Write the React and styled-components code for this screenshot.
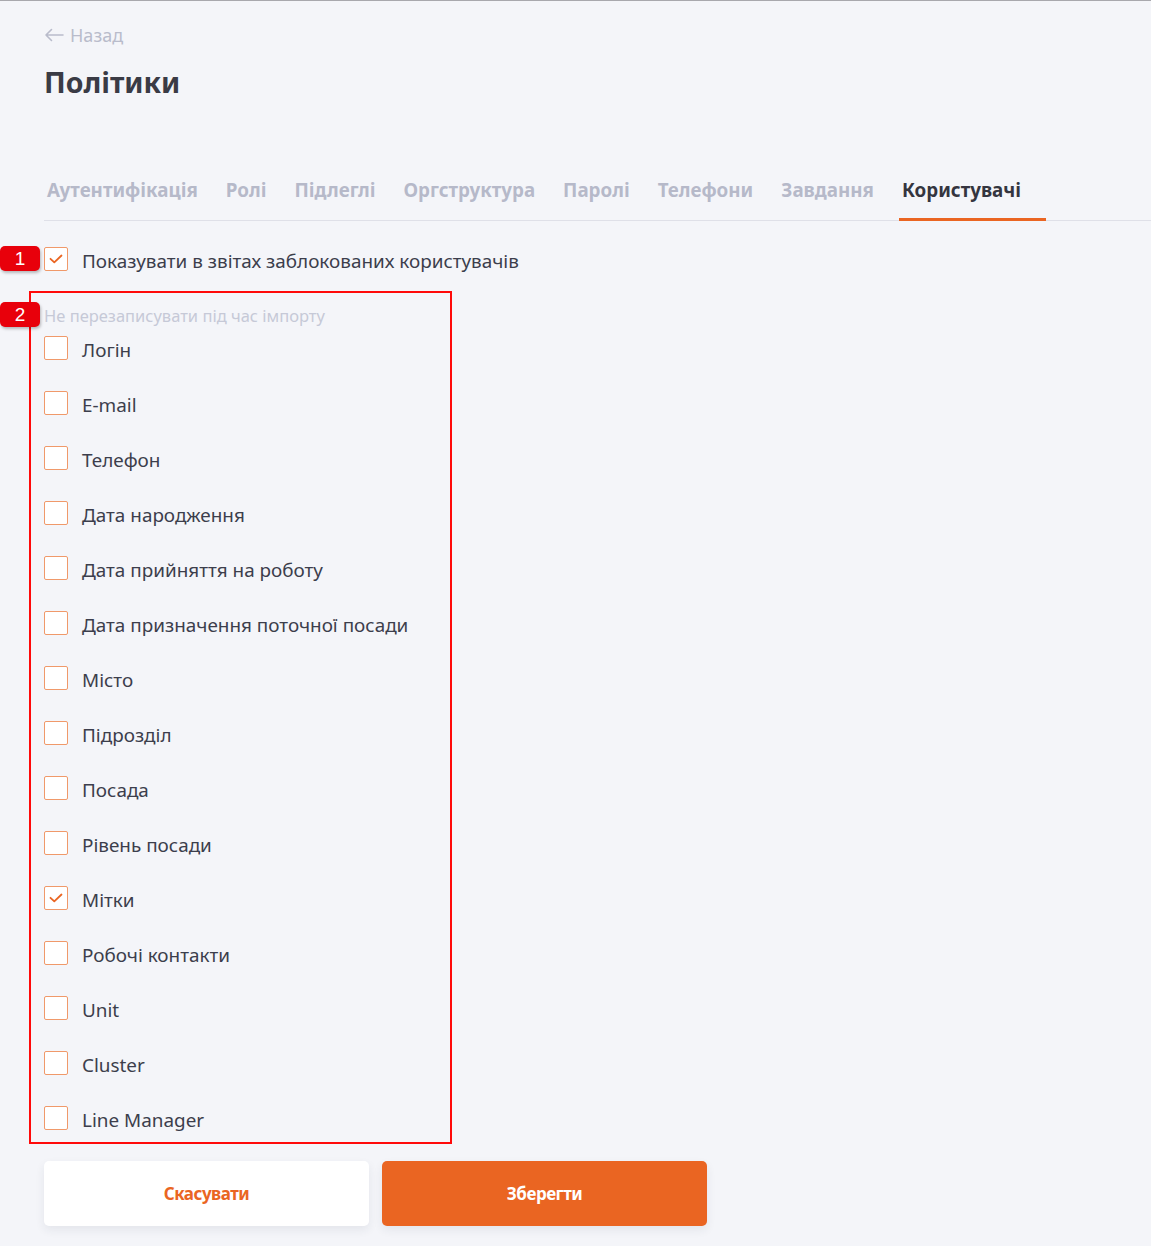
import React, { useState } from "react";
import styled, { createGlobalStyle } from "styled-components";

const Global = createGlobalStyle`
  html, body { margin: 0; padding: 0; background: #f4f5f9; }
  body {
    border-top: 1px solid #a8a8ad;
    font-family: "Noto Sans", "Open Sans", sans-serif;
    color: #3c3e4c;
  }
`;

const Page = styled.div`
  padding: 23px 0 40px 44px;
  min-height: 1180px;
`;

const Back = styled.a`
  display: inline-flex;
  align-items: center;
  gap: 6px;
  height: 22px;
  font-size: 18px;
  line-height: 22px;
  color: #b9bccb;
  cursor: pointer;
`;

const Title = styled.h1`
  margin: 17px 0 0;
  font-size: 28.5px;
  line-height: 36px;
  font-weight: 700;
  color: #3a3b45;
`;

const Tabs = styled.div`
  display: flex;
  margin-top: 78px;
  border-bottom: 1px solid #dfe0e8;
`;

const Tab = styled.div`
  padding: 0 25px 16px 3px;
  margin-bottom: -1px;
  font-size: 18.8px;
  line-height: 24px;
  font-weight: 700;
  color: ${(p) => (p.$active ? "#34353f" : "#b6b9c9")};
  border-bottom: 3px solid ${(p) => (p.$active ? "#ea6522" : "transparent")};
  white-space: nowrap;
`;

const Row = styled.label`
  position: relative;
  display: flex;
  align-items: center;
  gap: 14px;
  height: 24px;
  margin-top: ${(p) => p.$top || 0}px;
  font-size: 18.9px;
  line-height: 24px;
  cursor: pointer;
`;

const Text = styled.span`
  padding-top: 3px;
`;

const Box = styled.span`
  flex: none;
  width: 22px;
  height: 22px;
  border: 1px solid #f0996a;
  border-radius: 2px;
  background: #fff;
  display: flex;
  align-items: center;
  justify-content: center;
`;

const Badge = styled.div`
  position: absolute;
  left: ${(p) => p.$left}px;
  top: ${(p) => p.$top}px;
  width: 40px;
  height: 25px;
  border-radius: 5px;
  background: #e8000b;
  color: #fff;
  font-family: "Liberation Sans", Arial, sans-serif;
  font-size: 19px;
  line-height: 25px;
  text-align: center;
  box-shadow: 1px 2px 3px rgba(0, 0, 0, 0.25);
`;

const Group = styled.div`
  position: relative;
  width: 406px;
  margin: 20px 0 0 -15px;
  padding: 12px 0 12px 13px;
  border: 2px solid #ff0a0a;
  display: flex;
  flex-direction: column;
  gap: 31px;
`;

const Caption = styled.div`
  font-size: 16.5px;
  line-height: 22px;
  color: #c6c9d7;
  margin-bottom: -22px;
`;

const Buttons = styled.div`
  display: flex;
  gap: 13px;
  margin-top: 17px;
`;

const Button = styled.button`
  width: 325px;
  height: 65px;
  border: none;
  border-radius: 5px;
  font-family: "Noto Sans", sans-serif;
  font-size: 17px;
  font-weight: 700;
  letter-spacing: -0.5px;
  cursor: pointer;
  background: ${(p) => (p.$primary ? "#ea6522" : "#fff")};
  color: ${(p) => (p.$primary ? "#fff" : "#ea6522")};
  box-shadow: 0 4px 10px rgba(40, 45, 80, 0.08);
`;

const Check = () => (
  <svg width="14" height="10" viewBox="0 0 14 10" fill="none">
    <path d="M1.5 4.8 L5.3 8.3 L12.5 1.5" stroke="#ea6522" strokeWidth="1.8" strokeLinecap="round" strokeLinejoin="round" />
  </svg>
);

const Checkbox = ({ checked, onChange, children, top }) => (
  <Row $top={top} onClick={onChange}>
    <Box>{checked && <Check />}</Box>
    <Text>{children}</Text>
  </Row>
);

const tabs = ["Аутентифікація", "Ролі", "Підлеглі", "Оргструктура", "Паролі", "Телефони", "Завдання", "Користувачі"];

const fields = [
  "Логін",
  "E-mail",
  "Телефон",
  "Дата народження",
  "Дата прийняття на роботу",
  "Дата призначення поточної посади",
  "Місто",
  "Підрозділ",
  "Посада",
  "Рівень посади",
  "Мітки",
  "Робочі контакти",
  "Unit",
  "Cluster",
  "Line Manager",
];

export default function App() {
  const [showBlocked, setShowBlocked] = useState(true);
  const [checked, setChecked] = useState({ "Мітки": true });

  const toggle = (f) => setChecked((c) => ({ ...c, [f]: !c[f] }));

  return (
    <Page>
      <Global />
      <Back>
        <svg width="20" height="14" viewBox="0 0 20 14" fill="none">
          <path d="M19 7 H2 M7.5 1.5 L2 7 L7.5 12.5" stroke="#b9bccb" strokeWidth="1.6" strokeLinecap="round" strokeLinejoin="round" />
        </svg>
        Назад
      </Back>
      <Title>Політики</Title>

      <Tabs>
        {tabs.map((t) => (
          <Tab key={t} $active={t === "Користувачі"}>
            {t}
          </Tab>
        ))}
      </Tabs>

      <Checkbox top={26} checked={showBlocked} onChange={() => setShowBlocked(!showBlocked)}>
        <Badge $left={-44} $top={-1}>1</Badge>
        Показувати в звітах заблокованих користувачів
      </Checkbox>

      <Group>
        <Badge $left={-31} $top={9}>2</Badge>
        <Caption>Не перезаписувати під час імпорту</Caption>
        {fields.map((f) => (
          <Checkbox key={f} checked={!!checked[f]} onChange={() => toggle(f)}>
            {f}
          </Checkbox>
        ))}
      </Group>

      <Buttons>
        <Button>Скасувати</Button>
        <Button $primary>Зберегти</Button>
      </Buttons>
    </Page>
  );
}
